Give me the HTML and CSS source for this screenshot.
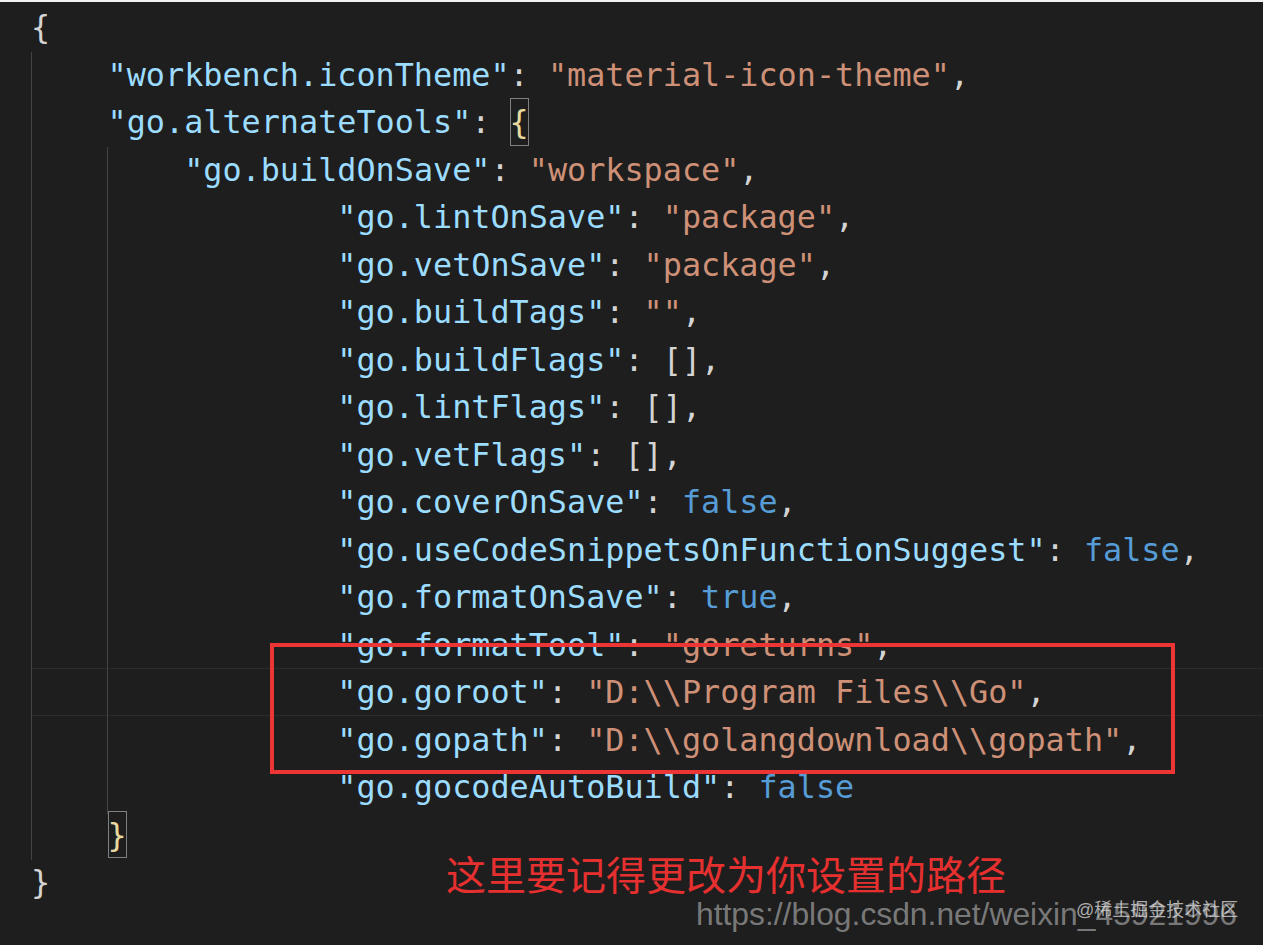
FILE: index.html
```html
<!DOCTYPE html>
<html lang="zh">
<head>
<meta charset="utf-8">
<title>settings.json</title>
<link rel="stylesheet" href="styles.css">
</head>
<body>
<div class="shot">
  <div class="editor">
    <div class="guide g1"></div>
    <div class="guide g2"></div>
    <pre class="code"><div class="ln"><span class="p">{</span></div><div class="ln">    <span class="k">"workbench.iconTheme"</span><span class="p">: </span><span class="s">"material-icon-theme"</span><span class="p">,</span></div><div class="ln">    <span class="k">"go.alternateTools"</span><span class="p">: </span><span class="match p">{</span></div><div class="ln">        <span class="k">"go.buildOnSave"</span><span class="p">: </span><span class="s">"workspace"</span><span class="p">,</span></div><div class="ln">                <span class="k">"go.lintOnSave"</span><span class="p">: </span><span class="s">"package"</span><span class="p">,</span></div><div class="ln">                <span class="k">"go.vetOnSave"</span><span class="p">: </span><span class="s">"package"</span><span class="p">,</span></div><div class="ln">                <span class="k">"go.buildTags"</span><span class="p">: </span><span class="s">""</span><span class="p">,</span></div><div class="ln">                <span class="k">"go.buildFlags"</span><span class="p">: [],</span></div><div class="ln">                <span class="k">"go.lintFlags"</span><span class="p">: [],</span></div><div class="ln">                <span class="k">"go.vetFlags"</span><span class="p">: [],</span></div><div class="ln">                <span class="k">"go.coverOnSave"</span><span class="p">: </span><span class="b">false</span><span class="p">,</span></div><div class="ln">                <span class="k">"go.useCodeSnippetsOnFunctionSuggest"</span><span class="p">: </span><span class="b">false</span><span class="p">,</span></div><div class="ln">                <span class="k">"go.formatOnSave"</span><span class="p">: </span><span class="b">true</span><span class="p">,</span></div><div class="ln">                <span class="k">"go.formatTool"</span><span class="p">: </span><span class="s">"goreturns"</span><span class="p">,</span></div><div class="ln current">                <span class="k">"go.goroot"</span><span class="p">: </span><span class="s">"D:\\Program Files\\Go"</span><span class="p">,</span></div><div class="ln">                <span class="k">"go.gopath"</span><span class="p">: </span><span class="s">"D:\\golangdownload\\gopath"</span><span class="p">,</span></div><div class="ln">                <span class="k">"go.gocodeAutoBuild"</span><span class="p">: </span><span class="b">false</span></div><div class="ln">    <span class="match p">}</span></div><div class="ln"><span class="p">}</span></div></pre>
    <div class="redbox"></div>
    <div class="note">这里要记得更改为你设置的路径</div>
    <div class="wm">https://blog.csdn.net/weixin_45921996</div>
    <div class="wm2">@稀土掘金技术社区</div>
  </div>
</div>
</body>
</html>
```
FILE: styles.css
```css
html, body {
  margin: 0;
  padding: 0;
  background: #1e1e1e;
}
.shot {
  width: 1263px;
  height: 945px;
  border-top: 2px solid #f2f2f2;
  box-sizing: border-box;
  overflow: hidden;
}
.editor {
  position: relative;
  height: 100%;
  background: #1e1e1e;
  padding: 1px 0 0 31px;
  box-sizing: border-box;
}
.code {
  margin: 0;
  font-family: "DejaVu Sans Mono", "Liberation Mono", monospace;
  font-size: 31.8px;
  line-height: 47.5px;
  color: #d4d4d4;
  white-space: pre;
}
.ln {
  height: 47.5px;
  box-sizing: border-box;
}
.ln.current {
  border-top: 1px solid #2c2c2c;
  border-bottom: 1px solid #2c2c2c;
  line-height: 45.5px;
}
.k { color: #9cdcfe; }
.s { color: #ce9178; }
.b { color: #569cd6; }
.p { color: #d4d4d4; }
.match {
  display: inline-block;
  height: 47.5px;
  vertical-align: top;
  box-shadow: inset 0 0 0 1px #808080;
  color: #e8d9a0;
}
.guide {
  position: absolute;
  width: 1px;
  background: #444444;
}
.g1 { left: 31px; top: 50px; height: 808px; }
.g2 { left: 107px; top: 145px; height: 667px; }
.redbox {
  position: absolute;
  left: 270px;
  top: 641px;
  width: 905px;
  height: 131px;
  border: 4px solid #ee3535;
  box-sizing: border-box;
}
.note {
  position: absolute;
  left: 446px;
  top: 847px;
  font-family: "Noto Sans CJK SC", sans-serif;
  font-size: 40px;
  line-height: 48px;
  color: #e63030;
}
.wm {
  position: absolute;
  left: 696px;
  top: 892px;
  font-family: "Liberation Sans", Arial, sans-serif;
  font-size: 31.8px;
  line-height: 40px;
  color: rgba(200, 200, 200, 0.55);
}
.wm2 {
  position: absolute;
  left: 1076px;
  top: 896px;
  font-family: "Liberation Sans", "Noto Sans CJK SC", sans-serif;
  font-size: 18px;
  line-height: 24px;
  color: rgba(220, 220, 220, 0.75);
}
```
